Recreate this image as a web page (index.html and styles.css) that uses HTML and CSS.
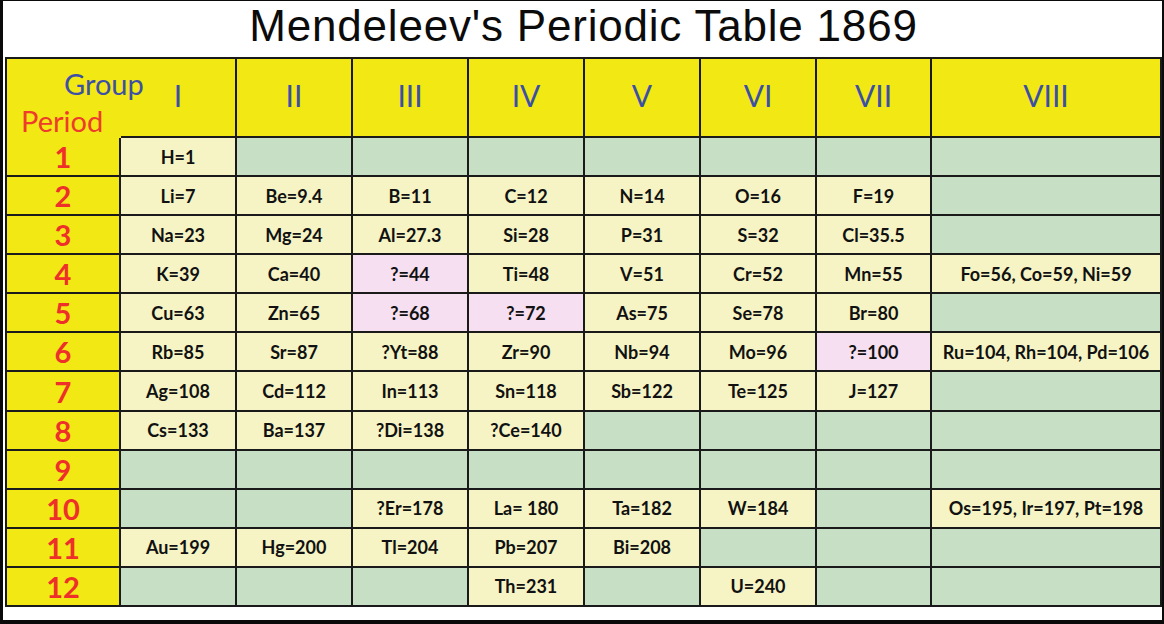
FILE: index.html
```html
<!DOCTYPE html>
<html>
<head>
<meta charset="utf-8">
<link rel="stylesheet" href="styles.css">
</head>
<body>
<div class="frame">
  <h1 class="title">Mendeleev's Periodic Table 1869</h1>
  <div class="table">
    <div class="corner">
      <span class="lbl-group">Group</span>
      <span class="lbl-period">Period</span>
    </div>
    <div class="hd">I</div>
    <div class="hd">II</div>
    <div class="hd">III</div>
    <div class="hd">IV</div>
    <div class="hd">V</div>
    <div class="hd">VI</div>
    <div class="hd">VII</div>
    <div class="hd">VIII</div>

    <div class="pn">1</div>
    <div class="c y">H=1</div><div class="c g"></div><div class="c g"></div><div class="c g"></div><div class="c g"></div><div class="c g"></div><div class="c g"></div><div class="c g"></div>

    <div class="pn">2</div>
    <div class="c y">Li=7</div><div class="c y">Be=9.4</div><div class="c y">B=11</div><div class="c y">C=12</div><div class="c y">N=14</div><div class="c y">O=16</div><div class="c y">F=19</div><div class="c g"></div>

    <div class="pn">3</div>
    <div class="c y">Na=23</div><div class="c y">Mg=24</div><div class="c y">Al=27.3</div><div class="c y">Si=28</div><div class="c y">P=31</div><div class="c y">S=32</div><div class="c y">Cl=35.5</div><div class="c g"></div>

    <div class="pn">4</div>
    <div class="c y">K=39</div><div class="c y">Ca=40</div><div class="c p">?=44</div><div class="c y">Ti=48</div><div class="c y">V=51</div><div class="c y">Cr=52</div><div class="c y">Mn=55</div><div class="c y">Fo=56, Co=59, Ni=59</div>

    <div class="pn">5</div>
    <div class="c y">Cu=63</div><div class="c y">Zn=65</div><div class="c p">?=68</div><div class="c p">?=72</div><div class="c y">As=75</div><div class="c y">Se=78</div><div class="c y">Br=80</div><div class="c g"></div>

    <div class="pn">6</div>
    <div class="c y">Rb=85</div><div class="c y">Sr=87</div><div class="c y">?Yt=88</div><div class="c y">Zr=90</div><div class="c y">Nb=94</div><div class="c y">Mo=96</div><div class="c p">?=100</div><div class="c y">Ru=104, Rh=104, Pd=106</div>

    <div class="pn">7</div>
    <div class="c y">Ag=108</div><div class="c y">Cd=112</div><div class="c y">In=113</div><div class="c y">Sn=118</div><div class="c y">Sb=122</div><div class="c y">Te=125</div><div class="c y">J=127</div><div class="c g"></div>

    <div class="pn">8</div>
    <div class="c y">Cs=133</div><div class="c y">Ba=137</div><div class="c y">?Di=138</div><div class="c y">?Ce=140</div><div class="c g"></div><div class="c g"></div><div class="c g"></div><div class="c g"></div>

    <div class="pn">9</div>
    <div class="c g"></div><div class="c g"></div><div class="c g"></div><div class="c g"></div><div class="c g"></div><div class="c g"></div><div class="c g"></div><div class="c g"></div>

    <div class="pn">10</div>
    <div class="c g"></div><div class="c g"></div><div class="c y">?Er=178</div><div class="c y">La= 180</div><div class="c y">Ta=182</div><div class="c y">W=184</div><div class="c g"></div><div class="c y">Os=195, Ir=197, Pt=198</div>

    <div class="pn">11</div>
    <div class="c y">Au=199</div><div class="c y">Hg=200</div><div class="c y">Tl=204</div><div class="c y">Pb=207</div><div class="c y">Bi=208</div><div class="c g"></div><div class="c g"></div><div class="c g"></div>

    <div class="pn">12</div>
    <div class="c g"></div><div class="c g"></div><div class="c g"></div><div class="c y">Th=231</div><div class="c g"></div><div class="c y">U=240</div><div class="c g"></div><div class="c g"></div>
  </div>
</div>
</body>
</html>
```

FILE: styles.css
```css
html, body {
  margin: 0;
  padding: 0;
}
body {
  background: #0a0a0a;
  width: 1164px;
  height: 624px;
  overflow: hidden;
}
.frame {
  box-sizing: border-box;
  margin: 1px 2px 0 3px;
  width: 1159px;
  height: 619px;
  background: #ffffff;
  padding: 0 0 0 2px;
}
.title {
  margin: 0;
  height: 56px;
  line-height: 50px;
  text-align: center;
  font-family: "Liberation Sans", Arial, sans-serif;
  font-weight: 400;
  font-size: 44px;
  letter-spacing: 0.8px;
  color: #0b0b0b;
}
.table {
  box-sizing: border-box;
  display: grid;
  grid-template-columns: 114px 116px 116px 116px 116px 116px 116px 115px 230px;
  grid-template-rows: 79px repeat(12, 1fr);
  width: 1157px;
  height: 550px;
  border-left: 2px solid #1a1a1a;
  border-top: 2px solid #1a1a1a;
}
.table > div {
  box-sizing: border-box;
  border-right: 2px solid #1a1a1a;
  border-bottom: 2px solid #1a1a1a;
  display: flex;
  align-items: center;
  justify-content: center;
  min-width: 0;
}
.table > .corner {
  border-right: none;
  border-bottom: none;
  background: #f1e814;
  display: block;
  position: relative;
}
.lbl-group {
  position: relative;
  z-index: 1;
  display: block;
  margin: 10px 0 0 57px;
  font-family: "Lato", "Open Sans", sans-serif;
  font-size: 29px;
  line-height: 30px;
  color: #3d50a6;
  white-space: nowrap;
}
.lbl-period {
  display: block;
  margin: 7px 0 0 14px;
  font-family: "Lato", "Open Sans", sans-serif;
  font-size: 29px;
  line-height: 30px;
  color: #ee3b2c;
  white-space: nowrap;
}
.hd {
  background: #f1e814;
  font-family: "Lato", "Open Sans", sans-serif;
  font-weight: 400;
  font-size: 30px;
  color: #3b4fa5;
  padding-bottom: 6px;
}
.pn {
  background: #f1e814;
  font-family: "Lato", "Open Sans", sans-serif;
  font-weight: 700;
  font-size: 29px;
  color: #ee2f2a;
}
.c {
  font-family: "Lato", "Open Sans", sans-serif;
  font-weight: 700;
  font-size: 18px;
  color: #111111;
  white-space: nowrap;
}
.y { background: #f6f4c4; }
.g { background: #c6dfc5; }
.p { background: #f5dff0; }
```
